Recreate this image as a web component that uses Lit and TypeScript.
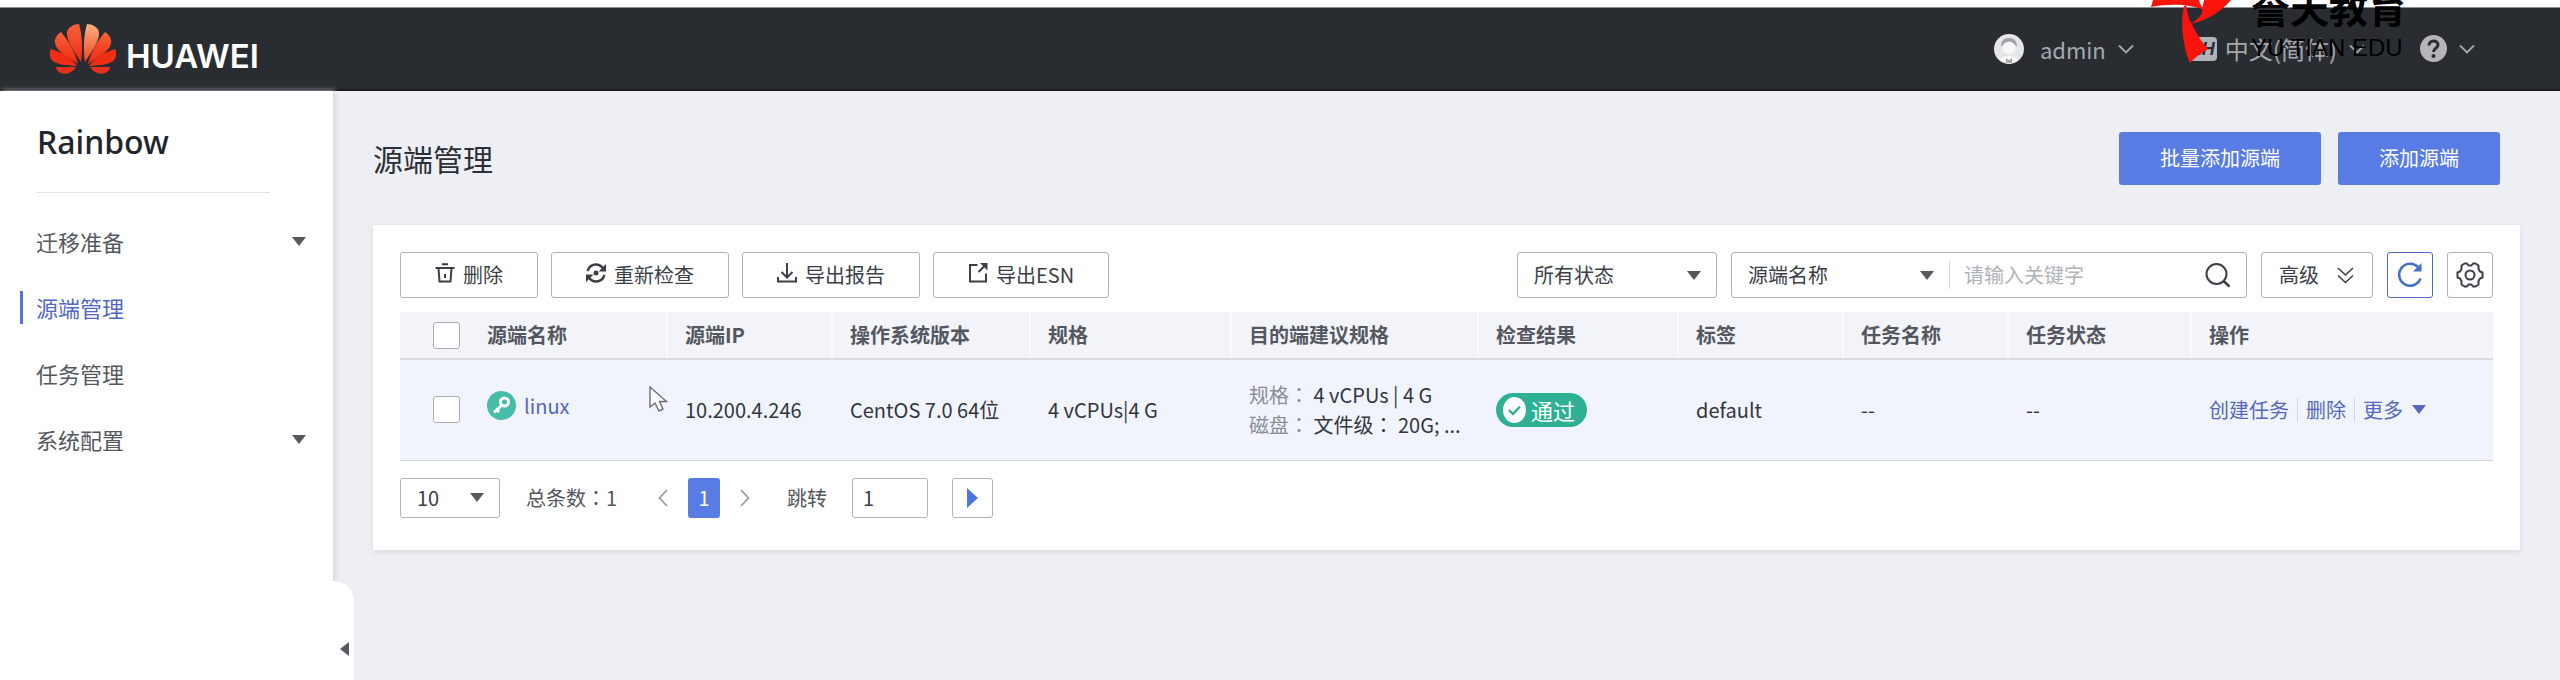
import { LitElement, html, css } from "lit";
import { customElement } from "lit/decorators.js";
import { classMap } from "lit/directives/class-map.js";

const nav = [
  { label: "迁移准备", active: false, sub: true },
  { label: "源端管理", active: true, sub: false },
  { label: "任务管理", active: false, sub: false },
  { label: "系统配置", active: false, sub: true },
];

const columns = [
  { label: "", width: 69 },
  { label: "源端名称", width: 198 },
  { label: "源端IP", width: 165 },
  { label: "操作系统版本", width: 198 },
  { label: "规格", width: 201 },
  { label: "目的端建议规格", width: 247 },
  { label: "检查结果", width: 200 },
  { label: "标签", width: 165 },
  { label: "任务名称", width: 165 },
  { label: "任务状态", width: 183 },
  { label: "操作", width: 302 },
];

const huaweiFlower = html`<svg width="68" height="52" viewBox="0 0 68 52" aria-hidden="true">
  <defs>
    <linearGradient id="warm" x1="0" y1="0" x2="0" y2="1">
      <stop offset="0" stop-color="#fbb184" />
      <stop offset="1" stop-color="#f5421c" />
    </linearGradient>
    <linearGradient id="red" x1="0" y1="0" x2="0" y2="1">
      <stop offset="0" stop-color="#f8613a" />
      <stop offset="1" stop-color="#ee2a12" />
    </linearGradient>
  </defs>
  <path fill="url(#red)" d="M32 39 C25 28 19 20 18 12 C17 5 24 1 30 1 C33 11 34 25 32 39Z" />
  <path fill="url(#warm)" d="M36 39 C43 28 49 20 50 12 C51 5 44 1 38 1 C35 11 34 25 36 39Z" />
  <path fill="url(#red)" d="M29 41 C18 34 7 28 6 20 C5 15 9 11 12 9 C19 17 26 29 29 41Z" />
  <path fill="url(#red)" d="M39 41 C50 34 61 28 62 20 C63 15 59 11 56 9 C49 17 42 29 39 41Z" />
  <path fill="#f02d17" d="M28 43 C17 42 6 42 2 36 C0 32 1 28 2 26 C12 29 22 35 28 43Z" />
  <path fill="#f02d17" d="M40 43 C51 42 62 42 66 36 C68 32 67 28 66 26 C56 29 46 35 40 43Z" />
  <path fill="#e8301c" d="M7 44 L27 44 C23 50 17 52 12 50 C9 49 7 47 7 44Z" />
  <path fill="#e8301c" d="M61 44 L41 44 C45 50 51 52 56 50 C59 49 61 47 61 44Z" />
</svg>`;

const caret = html`<svg class="caret" width="14" height="9" viewBox="0 0 14 9" aria-hidden="true">
  <path fill="currentColor" d="M0 0H14L7 9Z" />
</svg>`;

const chevron = html`<svg width="16" height="10" viewBox="0 0 16 10" aria-hidden="true">
  <path d="M1 1.5L8 8.5L15 1.5" fill="none" stroke="currentColor" stroke-width="1.8" />
</svg>`;

const trashIcon = html`<svg width="20" height="20" viewBox="0 0 20 20" fill="none" stroke="currentColor" stroke-width="2" aria-hidden="true">
  <path d="M7 1.2H13M.5 5H19.5M3.5 5L4.5 18.5H15.5L16.5 5M10 11V15" />
</svg>`;

const recheckIcon = html`<svg width="20" height="20" viewBox="0 0 20 20" fill="none" stroke="currentColor" stroke-width="2.4" aria-hidden="true">
  <path d="M1.5 8C3 3.5 6 1.5 10 1.5C13 1.5 15.5 3 17.5 6M18.5 12C17 16.5 14 18.5 10 18.5C7 18.5 4.5 17 2.5 14" />
  <path fill="currentColor" stroke="none" d="M20 1V8.5H12.5ZM0 19V11.5H7.5Z" />
  <circle cx="10" cy="10" r="2.5" fill="currentColor" stroke="none" />
</svg>`;

const downloadIcon = html`<svg width="20" height="20" viewBox="0 0 20 20" fill="none" stroke="currentColor" stroke-width="2" aria-hidden="true">
  <path d="M10 0V14M4.5 9L10 14.5L15.5 9M1 14V18.5H19V14" />
</svg>`;

const exportIcon = html`<svg width="20" height="20" viewBox="0 0 20 20" fill="none" stroke="currentColor" stroke-width="2" aria-hidden="true">
  <path d="M9.5 2H2V18.5H18V10.5M10.5 9L17 2.5" />
  <path fill="currentColor" stroke="none" d="M12 0H19.5V7.5Z" />
</svg>`;

const searchIcon = html`<svg width="26" height="26" viewBox="0 0 26 26" fill="none" stroke="currentColor" stroke-width="2" aria-hidden="true">
  <circle cx="11.5" cy="12" r="10" />
  <path d="M18.5 19L24.5 24.5" stroke-width="2.6" />
</svg>`;

const doubleChevron = html`<svg width="17" height="17" viewBox="0 0 17 17" fill="none" stroke="currentColor" stroke-width="1.6" aria-hidden="true">
  <path d="M1 1L8.5 8L16 1M1 8.5L8.5 15.5L16 8.5" />
</svg>`;

const refreshIcon = html`<svg width="26" height="26" viewBox="0 0 26 26" fill="none" stroke="currentColor" stroke-width="2.6" aria-hidden="true">
  <path d="M21 5A11 11 0 1 0 23.5 16.5" />
  <path fill="currentColor" stroke="none" d="M24.5 1V9.5H16Z" />
</svg>`;

const gearIcon = html`<svg width="28" height="28" viewBox="0 0 28 28" fill="none" stroke="currentColor" stroke-width="2" stroke-linejoin="round" aria-hidden="true">
  <path d="M8.500 2.500H11L12.500 4.500H15.500L17 2.500H19.500L22.500 4.500V8L24 10.500L26.500 11.500V16.500L24 17.500L22.500 20V23.500L19.500 25.500H17L15.500 23.500H12.500L11 25.500H8.500L5.500 23.500V20L4 17.500L1.500 16.500V11.500L4 10.500L5.500 8V4.500Z" />
  <circle cx="14" cy="14" r="4.5" />
</svg>`;

@customElement("app-root")
export class AppRoot extends LitElement {
  static styles = css`
    :host {
      display: flex;
      flex-direction: column;
      min-height: 100vh;
      position: relative;
      overflow: hidden;
      background: #edeff4;
      color: #33363d;
      font: 20px/30px "Noto Sans CJK SC", "Noto Sans", sans-serif;
    }
    *, *::before, *::after { box-sizing: border-box; }
    button, input, select { font: inherit; color: inherit; margin: 0; }
    button { cursor: pointer; }
    a { color: #5468bd; text-decoration: none; }
    svg { display: block; flex: none; }
    .mid { font-family: "Noto Sans CJK TC", "Noto Sans", sans-serif; }

    .strip { height: 8px; background: #fff; border-bottom: 1px solid #8d8f92; }
    .top {
      display: flex;
      align-items: center;
      justify-content: space-between;
      height: 83px;
      padding: 0 85px 0 49px;
      background: #292d32;
      border-bottom: 2px solid #17191c;
      color: #a6a8ad;
    }
    .brand { display: flex; align-items: center; gap: 9px; }
    .brand-name { color: #fff; font: 600 33px/40px Inter, sans-serif; padding-top: 14px; }
    .tools { display: flex; gap: 55px; }
    .tool {
      display: flex;
      align-items: center;
      gap: 12px;
      padding: 0;
      border: 0;
      background: none;
      font-size: 22px;
    }
    .avatar { margin-right: 4px; }
    .lang { font-size: 24px; }
    .zh {
      width: 28px;
      height: 24px;
      border-radius: 4px;
      background: #b0b4ba;
      color: #292d32;
      font: italic bold 18px/24px "Liberation Sans", sans-serif;
      text-align: center;
    }
    .lang-text { margin-left: -4px; }

    .mark {
      position: absolute;
      top: 0;
      right: 153px;
      display: flex;
      color: #000;
      pointer-events: none;
    }
    .mark-name { font: bold 39px/44px "Noto Sans CJK SC", sans-serif; margin-top: -16px; }
    .mark-latin { font: 24px/24px "Liberation Sans", sans-serif; margin-top: 8px; }

    .body { display: flex; flex: 1; }
    .side {
      position: relative;
      flex: none;
      width: 333px;
      background: #fff;
      box-shadow: 2px 0 5px #d4d6dc;
    }
    .product {
      margin: 0 63px 0 37px;
      border-bottom: 1px solid #dfe1e6;
      color: #22252b;
      font: 500 32px/101px "Noto Sans", sans-serif;
    }
    .menu { list-style: none; margin: 0; padding: 15px 0; }
    .menu-link {
      display: flex;
      align-items: center;
      justify-content: space-between;
      height: 66px;
      padding: 0 27px 0 36px;
      color: #55585e;
      font-size: 22px;
    }
    .active { color: #5167c4; position: relative; }
    .active::before {
      content: "";
      position: absolute;
      left: 20px;
      top: 17px;
      bottom: 16px;
      width: 3px;
      background: #5872d8;
    }
    .collapse {
      position: absolute;
      left: 100%;
      bottom: 0;
      width: 21px;
      height: 99px;
      padding: 36px 0 0 7px;
      border: 0;
      border-radius: 0 20px 0 0;
      background: #fff;
    }

    .main { flex: 1; min-width: 0; padding: 0 40px; }
    .head {
      display: flex;
      align-items: center;
      justify-content: space-between;
      height: 134px;
      padding-right: 20px;
    }
    .title { margin: 0; font-size: 30px; line-height: 44px; font-weight: 400; color: #2c2f36; }
    .actions { display: flex; gap: 17px; }
    .primary {
      height: 53px;
      padding: 0 41px;
      border: 0;
      border-radius: 3px;
      background: #587ce4;
      color: #fff;
    }

    .card {
      padding: 27px 27px 32px;
      background: #fff;
      box-shadow: 0 2px 6px #d9dbe0;
    }
    .bar { display: flex; flex-wrap: wrap; justify-content: space-between; gap: 14px; margin-bottom: 14px; }
    .group { display: flex; gap: 13px; }
    .filters { gap: 14px; }
    .box {
      display: flex;
      align-items: center;
      height: 46px;
      border: 1px solid #b0b2b8;
      border-radius: 3px;
      background: #fff;
      color: #3c3f46;
    }
    .btn { gap: 8px; padding: 0 34px; }
    .btn svg { margin-bottom: 4px; }
    .pick { position: relative; display: flex; align-items: center; color: #55585e; }
    .pick select {
      appearance: none;
      width: 100%;
      height: 100%;
      padding: 0 32px 0 16px;
      border: 0;
      background: transparent;
      color: #3c3f46;
    }
    .pick .caret { position: absolute; right: 15px; pointer-events: none; }
    .state { width: 200px; }
    .search { width: 516px; }
    .field { width: 217px; height: 100%; }
    .keyword {
      flex: 1;
      min-width: 0;
      height: 28px;
      padding: 0 14px;
      border: 0;
      border-left: 1px solid #d8dade;
      background: none;
      outline: 0;
    }
    .keyword::placeholder { color: #b1b3b8; }
    .icon-btn { padding: 0; border: 0; background: none; }
    .search .icon-btn { margin-right: 15px; }
    .more { gap: 18px; padding: 0 18px 0 17px; }
    .square { width: 46px; justify-content: center; padding: 0; }
    .blue { border-color: #5269c6; color: #4570c8; }

    .grid { width: 100%; table-layout: fixed; border-collapse: collapse; }
    .grid th {
      height: 47px;
      padding: 0 0 0 17px;
      text-align: left;
      font-weight: 700;
      color: #54575f;
      background: #f2f4f9;
      border-left: 2px solid #fafbfd;
      border-bottom: 2px solid #d9dce3;
    }
    .grid th:nth-child(-n + 2) { border-left: 0; padding-left: 18px; }
    .grid td {
      height: 101px;
      padding: 0 0 0 18px;
      background: #f1f4fc;
      border-bottom: 1px solid #d2d5da;
      white-space: nowrap;
    }
    .grid tr .check:first-child { padding-left: 33px; }
    .tick {
      appearance: none;
      display: block;
      width: 27px;
      height: 27px;
      border: 1px solid #a9acb3;
      border-radius: 3px;
      background: #fff;
    }
    .name { position: relative; }
    .host { display: flex; align-items: center; gap: 8px; padding-bottom: 8px; }
    .pointer { position: absolute; left: 180px; top: 26px; }
    .muted { color: #8b8e96; }
    .pass {
      display: inline-flex;
      align-items: center;
      gap: 5px;
      height: 34px;
      padding: 0 12px 0 7px;
      border-radius: 17px;
      background: #2eb094;
      color: #fff;
      font-size: 22px;
      vertical-align: middle;
    }
    .ops { display: flex; align-items: center; gap: 8px; }
    .ops i { width: 1px; height: 24px; background: #d3d6e2; }
    .ops a { display: flex; align-items: center; gap: 9px; }

    .pager { display: flex; align-items: center; margin-top: 17px; color: #54575f; }
    .size { width: 100px; height: 40px; margin-right: 26px; }
    .total { margin-right: 41px; }
    .pages { display: flex; align-items: center; gap: 20px; margin-right: 37px; color: #9a9ca2; }
    .current {
      width: 32px;
      height: 40px;
      padding: 0;
      border: 0;
      border-radius: 3px;
      background: #587ce4;
      color: #fff;
    }
    .jump { display: flex; align-items: center; gap: 25px; margin-right: 24px; }
    .jump input { width: 76px; height: 40px; padding: 0 10px; }
    .go { width: 41px; height: 40px; justify-content: center; padding: 0; color: #4a76db; }
  `;

  private header() {
    return html`
      <header class="top">
        <div class="brand">${huaweiFlower}<span class="brand-name">HUAWEI</span></div>
        <div class="tools">
          <button class="tool">
            <svg class="avatar" width="30" height="30" viewBox="0 0 30 30" aria-hidden="true">
              <circle cx="15" cy="15" r="15" fill="#e4e6e8" />
              <path d="M7 13C7 7 10 4 15 4S23 7 23 13L21 11C19 9 11 9 9 11Z" fill="#9da1a5" />
              <circle cx="15" cy="14" r="6.5" fill="#f6f7f8" />
              <path d="M6 26C8 21 22 21 24 26C19 31 11 31 6 26Z" fill="#fff" />
              <path d="M12 24L15 26L18 24V29H12Z" fill="#a9adb0" />
            </svg>
            <span>admin</span>${chevron}
          </button>
          <button class="tool lang">
            <span class="zh">ZH</span><span class="lang-text">中文(简体)</span>${chevron}
          </button>
          <button class="tool" aria-label="help">
            <svg width="27" height="27" viewBox="0 0 27 27" aria-hidden="true">
              <circle cx="13.5" cy="13.5" r="13.5" fill="#b3b5b9" />
              <path d="M9 10.5C9 4.5 18 4.5 18 10C18 13.5 13.5 13 13.5 17" fill="none" stroke="#292d32" stroke-width="3" />
              <circle cx="13.5" cy="21" r="2" fill="#292d32" />
            </svg>
            ${chevron}
          </button>
        </div>
      </header>
      <div class="mark">
        <svg width="101" height="66" viewBox="0 0 101 66" aria-hidden="true">
          <g fill="#fb140c">
            <path d="M3 0H49C50 4 52 7 54 10C42 5 22 3 1 7Z" />
            <path d="M54 0H81C72 11 58 20 41 24C50 18 54 12 52 9Z" />
            <path d="M36 5C38 14 38 19 42 24C47 35 52 42 58 49C50 54 44 58 40 63C33 48 30 22 34 6Z" />
          </g>
        </svg>
        <div>
          <div class="mark-name">誉天教育</div>
          <div class="mark-latin">YU TIAN EDU</div>
        </div>
      </div>`;
  }

  private sidebar() {
    return html`
      <aside class="side">
        <div class="product">Rainbow</div>
        <nav>
          <ul class="menu">
            ${nav.map(
              (n) => html`<li>
                <a href="#" class=${classMap({ "menu-link": true, active: n.active })}>
                  <span>${n.label}</span>${n.sub ? caret : null}
                </a>
              </li>`
            )}
          </ul>
        </nav>
        <button class="collapse" aria-label="collapse">
          <svg width="9" height="14" viewBox="0 0 9 14" aria-hidden="true"><path d="M9 0V14L0 7Z" fill="#55585e" /></svg>
        </button>
      </aside>`;
  }

  private toolbar() {
    return html`
      <div class="bar">
        <div class="group">
          <button class="box btn">${trashIcon}删除</button>
          <button class="box btn">${recheckIcon}重新检查</button>
          <button class="box btn">${downloadIcon}导出报告</button>
          <button class="box btn">${exportIcon}导出ESN</button>
        </div>
        <div class="group filters">
          <label class="box pick state">
            <select aria-label="状态"><option>所有状态</option></select>${caret}
          </label>
          <div class="box search">
            <label class="pick field">
              <select aria-label="字段"><option>源端名称</option></select>${caret}
            </label>
            <input class="keyword" aria-label="关键字" placeholder="请输入关键字" />
            <button class="icon-btn" aria-label="搜索">${searchIcon}</button>
          </div>
          <button class="box more">高级${doubleChevron}</button>
          <button class="box square blue" aria-label="刷新">${refreshIcon}</button>
          <button class="box square" aria-label="设置">${gearIcon}</button>
        </div>
      </div>`;
  }

  private table() {
    return html`
      <table class="grid">
        <colgroup>
          ${columns.map((c) => html`<col style="width:${c.width}px" />`)}
        </colgroup>
        <thead>
          <tr>
            ${columns.map((c) =>
              c.label
                ? html`<th>${c.label}</th>`
                : html`<th class="check"><input class="tick" type="checkbox" aria-label="全选" /></th>`
            )}
          </tr>
        </thead>
        <tbody>
          <tr>
            <td class="check"><input class="tick" type="checkbox" aria-label="linux" /></td>
            <td class="name">
              <div class="host">
                <svg width="29" height="29" viewBox="0 0 29 29" aria-hidden="true">
                  <circle cx="14.5" cy="14.5" r="14.5" fill="#47bda8" />
                  <circle cx="17.5" cy="11" r="4" fill="none" stroke="#fff" stroke-width="3" />
                  <path d="M15 14L7 21.5M9.5 18.5L12 21" fill="none" stroke="#fff" stroke-width="3" />
                </svg>
                <a href="#">linux</a>
              </div>
              <svg class="pointer" width="20" height="27" viewBox="0 0 20 27" aria-hidden="true">
                <path d="M1 1V21L6 17L10 25L14 23L10.5 15.5H17.5Z" fill="#fff" stroke="#6c6f78" stroke-width="1.4" />
              </svg>
            </td>
            <td>10.200.4.246</td>
            <td>CentOS 7.0 64位</td>
            <td>4 vCPUs|4 G</td>
            <td>
              <div><span class="muted mid">规格：</span> 4 vCPUs | 4 G</div>
              <div><span class="muted mid">磁盘：</span> 文件级<span class="mid">：</span> 20G; ...</div>
            </td>
            <td>
              <span class="pass">
                <svg width="23" height="26" viewBox="0 0 23 26" aria-hidden="true">
                  <ellipse cx="11.5" cy="13" rx="11.5" ry="13" fill="#fff" />
                  <path d="M6 13L10 17L17 9.5" fill="none" stroke="#2eb094" stroke-width="2.4" />
                </svg>
                通过
              </span>
            </td>
            <td>default</td>
            <td>--</td>
            <td>--</td>
            <td>
              <div class="ops">
                <a href="#">创建任务</a><i></i><a href="#">删除</a><i></i><a href="#">更多${caret}</a>
              </div>
            </td>
          </tr>
        </tbody>
      </table>`;
  }

  private pager() {
    return html`
      <div class="pager">
        <label class="box pick size">
          <select aria-label="每页条数"><option>10</option></select>${caret}
        </label>
        <span class="total">总条数<span class="mid">：</span>1</span>
        <div class="pages">
          <button class="icon-btn" aria-label="上一页">
            <svg width="10" height="18" viewBox="0 0 10 18" aria-hidden="true"><path d="M9 1L1.5 9L9 17" fill="none" stroke="currentColor" stroke-width="1.8" /></svg>
          </button>
          <button class="current">1</button>
          <button class="icon-btn" aria-label="下一页">
            <svg width="10" height="18" viewBox="0 0 10 18" aria-hidden="true"><path d="M1 1L8.5 9L1 17" fill="none" stroke="currentColor" stroke-width="1.8" /></svg>
          </button>
        </div>
        <label class="jump">跳转<input class="box" type="text" value="1" /></label>
        <button class="box go" aria-label="跳转">
          <svg width="11" height="20" viewBox="0 0 11 20" aria-hidden="true"><path d="M0 0V20L11 10Z" fill="currentColor" /></svg>
        </button>
      </div>`;
  }

  render() {
    return html`
      <div class="strip"></div>
      ${this.header()}
      <div class="body">
        ${this.sidebar()}
        <main class="main">
          <div class="head">
            <h1 class="title">源端管理</h1>
            <div class="actions">
              <button class="primary">批量添加源端</button>
              <button class="primary">添加源端</button>
            </div>
          </div>
          <section class="card">${this.toolbar()}${this.table()}${this.pager()}</section>
        </main>
      </div>`;
  }
}
